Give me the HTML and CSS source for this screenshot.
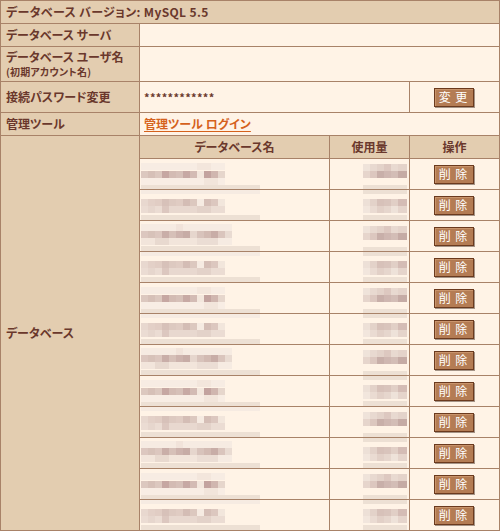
FILE: index.html
```html
<!DOCTYPE html>
<html lang="ja">
<head>
<meta charset="utf-8">
<title>データベース</title>
<link rel="stylesheet" href="styles.css">
</head>
<body>
<table class="db">
  <colgroup>
    <col class="c-label">
    <col class="c-name">
    <col class="c-use">
    <col class="c-op">
  </colgroup>
  <tr class="r22">
    <th class="title" colspan="4">データベース バージョン: MySQL 5.5</th>
  </tr>
  <tr class="r22">
    <th class="label">データベース サーバ</th>
    <td class="val" colspan="3"></td>
  </tr>
  <tr class="r34">
    <th class="label">データベース ユーザ名<br><span class="small">(初期アカウント名)</span></th>
    <td class="val" colspan="3"></td>
  </tr>
  <tr class="r30">
    <th class="label">接続パスワード変更</th>
    <td class="val pw" colspan="2">************</td>
    <td class="op"><button class="btn" type="button">変 更</button></td>
  </tr>
  <tr class="r22">
    <th class="label">管理ツール</th>
    <td class="val" colspan="3"><a class="link" href="#">管理ツール ログイン</a></td>
  </tr>
  <tr class="r22">
    <th class="label" rowspan="13">データベース</th>
    <th class="head">データベース名</th>
    <th class="head">使用量</th>
    <th class="head">操作</th>
  </tr>
  <tr class="r30"><td class="name"><div class="mz pa"></div></td><td class="use"><div class="mu ua"></div></td><td class="op"><button class="btn" type="button">削 除</button></td></tr>
  <tr class="r30"><td class="name"><div class="mz pb"></div></td><td class="use"><div class="mu ub"></div></td><td class="op"><button class="btn" type="button">削 除</button></td></tr>
  <tr class="r30"><td class="name"><div class="mz pc"></div></td><td class="use"><div class="mu ua"></div></td><td class="op"><button class="btn" type="button">削 除</button></td></tr>
  <tr class="r30"><td class="name"><div class="mz pb"></div></td><td class="use"><div class="mu ub"></div></td><td class="op"><button class="btn" type="button">削 除</button></td></tr>
  <tr class="r30"><td class="name"><div class="mz pa"></div></td><td class="use"><div class="mu ua"></div></td><td class="op"><button class="btn" type="button">削 除</button></td></tr>
  <tr class="r30"><td class="name"><div class="mz pb"></div></td><td class="use"><div class="mu ub"></div></td><td class="op"><button class="btn" type="button">削 除</button></td></tr>
  <tr class="r30"><td class="name"><div class="mz pc"></div></td><td class="use"><div class="mu ua"></div></td><td class="op"><button class="btn" type="button">削 除</button></td></tr>
  <tr class="r30"><td class="name"><div class="mz pa"></div></td><td class="use"><div class="mu ub"></div></td><td class="op"><button class="btn" type="button">削 除</button></td></tr>
  <tr class="r30"><td class="name"><div class="mz pb"></div></td><td class="use"><div class="mu ua"></div></td><td class="op"><button class="btn" type="button">削 除</button></td></tr>
  <tr class="r30"><td class="name"><div class="mz pc"></div></td><td class="use"><div class="mu ub"></div></td><td class="op"><button class="btn" type="button">削 除</button></td></tr>
  <tr class="r30"><td class="name"><div class="mz pa"></div></td><td class="use"><div class="mu ua"></div></td><td class="op"><button class="btn" type="button">削 除</button></td></tr>
  <tr class="r30"><td class="name"><div class="mz pb"></div></td><td class="use"><div class="mu ub"></div></td><td class="op"><button class="btn" type="button">削 除</button></td></tr>
</table>
</body>
</html>
```
FILE: styles.css
```css
html, body {
  margin: 0;
  padding: 0;
  background: #fff3e6;
}

.db {
  width: 500px;
  table-layout: fixed;
  border-collapse: separate;
  border-spacing: 0;
  border-top: 1px solid #a88268;
  border-left: 1px solid #a88268;
  font-family: "Noto Sans CJK JP", "Noto Sans", sans-serif;
  font-size: 12px;
  line-height: 14px;
  color: #6a382c;
  font-feature-settings: "palt";
}

.c-label { width: 139px; }
.c-name { width: 190px; }
.c-use { width: 80px; }
.c-op { width: 90px; }

.db th,
.db td {
  border-right: 1px solid #a88268;
  border-bottom: 1px solid #a88268;
  padding: 0;
  box-sizing: border-box;
  vertical-align: middle;
}

.r22 > th, .r22 > td { height: 23px; }
.r30 > th, .r30 > td { height: 31px; }
.r34 > th, .r34 > td { height: 35px; }

.title,
.label {
  background: #e3cdb0;
  text-align: left;
  font-weight: 700;
  padding-left: 5px !important;
}

.title {
  letter-spacing: 0.35px;
}

.small {
  font-size: 10px;
  line-height: 12px;
  letter-spacing: 0.2px;
}

.val {
  background: #fff3e6;
  padding-left: 4px !important;
}

.pw {
  font-weight: 700;
  letter-spacing: 0.3px;
  font-size: 11px;
}

.link {
  color: #d5611c;
  font-weight: 700;
  text-decoration: underline;
  text-underline-offset: 2px;
}

.head {
  background: #e3cdb0;
  font-weight: 700;
  text-align: center;
}

.name,
.use,
.op {
  background: #fff3e6;
}

.op {
  text-align: center;
}

.btn {
  display: inline-block;
  width: 40px;
  height: 19px;
  margin: 0 0 0 -2px;
  padding: 0;
  box-sizing: border-box;
  background: #b47c54;
  border: 1px solid #6b3a1e;
  box-shadow: inset 1px 1px 0 #c9946c, 1px 1px 0 #a59487;
  color: #ffffff;
  font-family: "Noto Sans CJK JP", sans-serif;
  font-size: 12px;
  line-height: 16px;
  font-weight: 400;
  letter-spacing: 1px;
  cursor: pointer;
}

/* pixelated (blurred) content placeholders */
.mz {
  height: 30px;
  margin-left: 1px;
  background-repeat: no-repeat;
}

.mu {
  height: 30px;
  margin-left: 33px;
  background-repeat: no-repeat;
}

.pa {
  background-image:
    linear-gradient(90deg, #f7ece3 0 56px, #f3e6dc 56px 70px, #f7ece3 70px 84px),
    linear-gradient(90deg, #dcc8bf 0 7px, #d6c0b7 7px 14px, #dcc8bf 14px 21px, #c6a7a2 21px 28px, #d3bbb3 28px 35px, #d6c0b8 35px 42px, #c7a9a4 42px 49px, #d3bbb4 49px 56px, #f3e7dd 56px 63px, #c3a39f 63px 70px, #d0b6af 70px 77px, #e6d6cc 77px 84px),
    linear-gradient(90deg, #f8ede4 0 63px, #f2e5db 63px 77px, #f8ede4 77px 84px),
    linear-gradient(#ede0d4, #ede0d4);
  background-size: 84px 7px, 84px 7px, 84px 7px, 119px 4px;
  background-position: 0 4px, 0 12px, 0 19px, 0 26px;
}

.pb {
  background-image:
    linear-gradient(#f6ebe2, #f6ebe2),
    linear-gradient(90deg, #e8d8cf 0 7px, #e3d0c7 7px 14px, #e1cdc4 14px 21px, #d7c1b9 21px 28px, #ddc9c0 28px 35px, #e0ccc3 35px 42px, #d4bdb5 42px 49px, #dcc8bf 49px 56px, #f6ebe2 56px 63px, #d5beb6 63px 70px, #dcc7bf 70px 77px, #f2e6dc 77px 84px),
    linear-gradient(90deg, #ebdcd3 0 7px, #e6d6cd 7px 14px, #ebdcd3 14px 21px, #dcc7bf 21px 28px, #e8d8cf 28px 56px, #e3d2c9 56px 70px, #ebdcd3 70px 84px),
    linear-gradient(#ede0d4, #ede0d4);
  background-size: 119px 4px, 84px 7px, 84px 7px, 119px 7px;
  background-position: 0 0, 0 9px, 0 16px, 0 25px;
}

.pc {
  background-image:
    linear-gradient(90deg, #f6ebe2 0 35px, #f1e3da 35px 42px, #f6ebe2 42px 91px),
    linear-gradient(90deg, #dcc7bf 0 7px, #d7c2b9 7px 14px, #dcc7bf 14px 21px, #c9aea8 21px 28px, #d6c0b8 28px 35px, #cdb3ad 35px 42px, #c7aca6 42px 49px, #e6d6cd 49px 56px, #d8c3bb 56px 63px, #d2bab2 63px 70px, #c8ada7 70px 77px, #dac5bd 77px 84px, #e9dbd2 84px 91px),
    linear-gradient(90deg, #f2e5db 0 14px, #e8d9cf 14px 28px, #f2e5db 28px 56px, #ebddd4 56px 77px, #f6ebe2 77px 91px),
    linear-gradient(#ede0d4, #ede0d4);
  background-size: 91px 7px, 91px 7px, 91px 7px, 119px 5px;
  background-position: 0 3px, 0 10px, 0 17px, 0 25px;
}

.ua {
  background-image:
    linear-gradient(90deg, #efe3da 0 7px, #e8d9d0 7px 14px, #e3d2c9 14px 21px, #ddc8c0 21px 28px, #e8d9d0 28px 35px, #e4d3ca 35px 44px),
    linear-gradient(90deg, #e6d5cc 0 7px, #dcc7bf 7px 14px, #c8afa9 14px 21px, #cfb7b1 21px 28px, #d3bdb6 28px 35px, #c5aba5 35px 44px),
    linear-gradient(#ede0d4, #ede0d4);
  background-size: 44px 7px, 44px 7px, 44px 4px;
  background-position: 0 5px, 0 12px, 0 26px;
}

.ub {
  background-image:
    linear-gradient(#ede0d4, #ede0d4),
    linear-gradient(90deg, #ede0d7 0 7px, #e3d2c9 7px 14px, #d7c1b9 14px 21px, #d9c4bc 21px 28px, #e1cfc6 28px 35px, #d4bcb5 35px 44px),
    linear-gradient(90deg, #f2e6dd 0 7px, #eadbd2 7px 14px, #e2d0c7 14px 21px, #e6d6cd 21px 28px, #eee2d9 28px 35px, #e5d4cb 35px 44px),
    linear-gradient(#ede0d4, #ede0d4);
  background-size: 44px 4px, 44px 7px, 44px 7px, 44px 7px;
  background-position: 0 0, 0 9px, 0 16px, 0 25px;
}
```
